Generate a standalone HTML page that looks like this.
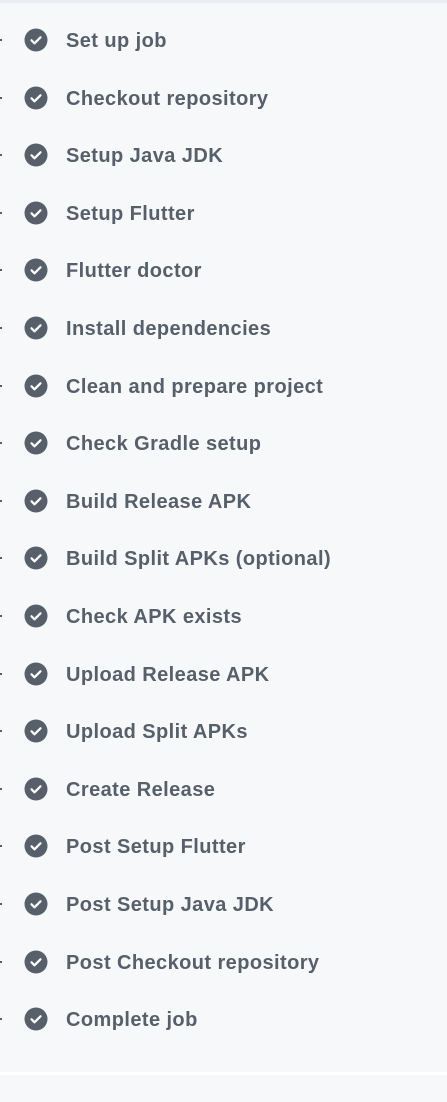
<!DOCTYPE html>
<html><head><meta charset="utf-8"><style>
html,body{margin:0;padding:0;width:447px;height:1102px;background:#f6f8fa;overflow:hidden}
.top{position:absolute;left:0;top:0;width:447px;height:3px;background:#eaedf1}
.bot{position:absolute;left:0;top:1072px;width:447px;height:3px;background:#fff}
.row{position:absolute;left:0;height:30px;width:447px}
.dot{position:absolute;left:0;top:14px;width:2px;height:2px;background:#57606a}
.ic{position:absolute;left:24px;top:3px;width:24px;height:24px}
.t{position:absolute;left:66px;top:4px;font:bold 20px/24px "Liberation Sans",sans-serif;color:#57606a;letter-spacing:0.42px;white-space:nowrap}
</style></head><body>
<div class="top"></div><div class="bot"></div>
<script>
var n=["Set up job","Checkout repository","Setup Java JDK","Setup Flutter","Flutter doctor","Install dependencies","Clean and prepare project","Check Gradle setup","Build Release APK","Build Split APKs (optional)","Check APK exists","Upload Release APK","Upload Split APKs","Create Release","Post Setup Flutter","Post Setup Java JDK","Post Checkout repository","Complete job"];
for(var i=0;i<n.length;i++){var y=Math.round(25+i*57.6);
document.write('<div class="row" style="top:'+y+'px"><div class="dot"></div><svg class="ic" viewBox="0 0 24 24"><circle cx="12" cy="12" r="11.5" fill="#57606a"/><path d="M7.5 12.3l3 3 6-6" stroke="#fff" stroke-width="2.2" fill="none" stroke-linecap="round" stroke-linejoin="round"/></svg><div class="t">'+n[i]+'</div></div>');}
</script>
</body></html>
